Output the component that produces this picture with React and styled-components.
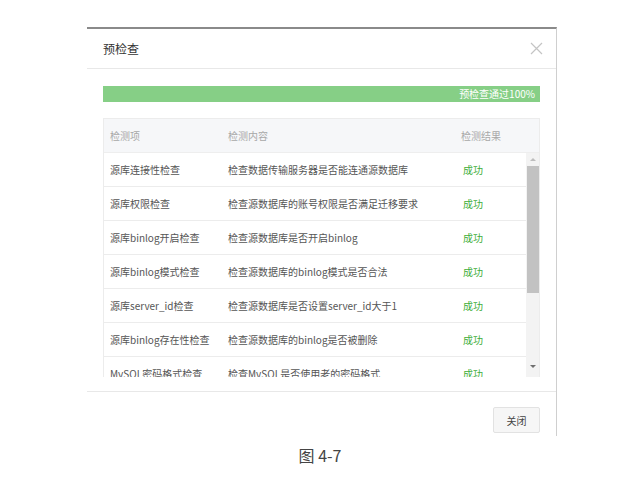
import React from 'react'
import styled, { createGlobalStyle } from 'styled-components'

const GlobalStyle = createGlobalStyle`
    html, body {
        margin: 0;
        padding: 0;
        background: #ffffff;
    }
    body {
        font-family: "Noto Sans CJK SC", "Noto Sans", sans-serif;
        color: #555;
    }
`

const rows = [
    ['源库连接性检查', '检查数据传输服务器是否能连通源数据库'],
    ['源库权限检查', '检查源数据库的账号权限是否满足迁移要求'],
    ['源库binlog开启检查', '检查源数据库是否开启binlog'],
    ['源库binlog模式检查', '检查源数据库的binlog模式是否合法'],
    ['源库server_id检查', '检查源数据库是否设置server_id大于1'],
    ['源库binlog存在性检查', '检查源数据库的binlog是否被删除'],
    ['MySQL密码格式检查', '检查MySQL是否使用老的密码格式'],
]

const CloseIcon = () => (
    <svg width="13" height="13" viewBox="0 0 13 13">
        <path d="M1 1 L12 12 M12 1 L1 12" stroke="#c4c4c4" strokeWidth="1.2" fill="none" />
    </svg>
)

const App = () => {
  return (
    <Page>
        <GlobalStyle />
        <Modal>
            <Header>
                <Title>预检查</Title>
                <CloseBtn><CloseIcon /></CloseBtn>
            </Header>
            <Body>
                <Progress>
                    <span>预检查通过100%</span>
                </Progress>
                <Table>
                    <HeadRow>
                        <span>检测项</span>
                        <span>检测内容</span>
                        <span>检测结果</span>
                    </HeadRow>
                    <TableBody>
                        <Rows>
                            {rows.map(([name, desc]) => (
                                <Row key={name}>
                                    <span>{name}</span>
                                    <span>{desc}</span>
                                    <Result>成功</Result>
                                </Row>
                            ))}
                        </Rows>
                        <Scrollbar>
                            <Arrow dir="up" />
                            <Thumb />
                            <Track />
                            <Arrow dir="down" />
                        </Scrollbar>
                    </TableBody>
                </Table>
            </Body>
            <Footer>
                <Button>关闭</Button>
            </Footer>
        </Modal>
        <Caption>图 4-7</Caption>
    </Page>
  )
}

const Page = styled.div`
    padding-top: 27px;
    padding-left: 87px;
    width: 470px;
`

const Modal = styled.div`
    width: 470px;
    box-sizing: border-box;
    background: #fff;
    border-top: 2px solid #8a8a8a;
    border-right: 1px solid #cfcfcf;
`

const Header = styled.div`
    height: 39px;
    display: flex;
    align-items: center;
    justify-content: space-between;
    padding: 0 13px 0 16px;
    border-bottom: 1px solid #e8e8e8;
`

const Title = styled.span`
    font-size: 12px;
    color: #333;
`

const CloseBtn = styled.span`
    display: flex;
    width: 13px;
    height: 13px;
`

const Body = styled.div`
    padding: 17px 16px 14px 16px;
    display: flex;
    flex-direction: column;
    gap: 16px;
`

const Progress = styled.div`
    height: 16px;
    background: #86cf86;
    display: flex;
    align-items: center;
    justify-content: flex-end;
    padding-right: 5px;
    span {
        font-size: 10px;
        color: #fff;
        line-height: 16px;
    }
`

const Table = styled.div`
    border: 1px solid #ececec;
    border-bottom: none;
    display: flex;
    flex-direction: column;
`

const HeadRow = styled.div`
    height: 33px;
    background: #f6f7f9;
    display: grid;
    grid-template-columns: 118px 233px 1fr;
    align-items: center;
    padding-left: 6px;
    font-size: 10px;
    color: #a8a8a8;
    border-bottom: 1px solid #eeeeee;
`

const TableBody = styled.div`
    height: 224px;
    display: flex;
    overflow: hidden;
`

const Rows = styled.div`
    flex: 1;
    display: flex;
    flex-direction: column;
`

const Row = styled.div`
    height: 34px;
    flex-shrink: 0;
    box-sizing: border-box;
    display: grid;
    grid-template-columns: 118px 235px 1fr;
    align-items: center;
    padding-left: 6px;
    font-size: 10px;
    color: #555;
    border-bottom: 1px solid #ececec;
`

const Result = styled.span`
    color: #3fae3a;
`

const Scrollbar = styled.div`
    width: 13px;
    background: #f3f3f3;
    display: flex;
    flex-direction: column;
    align-items: center;
    padding: 3px 0 7px;
    box-sizing: border-box;
`

const Arrow = styled.div`
    width: 0;
    height: 0;
    margin: 2px 0;
    border-left: 3px solid transparent;
    border-right: 3px solid transparent;
    ${p => p.dir === 'up'
        ? 'border-bottom: 3px solid #bdbdbd;'
        : 'border-top: 3px solid #6f6f6f;'}
`

const Thumb = styled.div`
    width: 12px;
    height: 127px;
    margin-top: 3px;
    background: #c2c2c2;
`

const Track = styled.div`
    flex: 1;
`

const Footer = styled.div`
    border-top: 1px solid #e8e8e8;
    display: flex;
    justify-content: flex-end;
    padding: 15px 16px 3px;
`

const Button = styled.button`
    width: 47px;
    height: 26px;
    padding: 0;
    background: #f6f6f6;
    border: 1px solid #e2e2e2;
    border-radius: 2px;
    font-family: "Noto Sans CJK SC", sans-serif;
    font-size: 10px;
    color: #444;
`

const Caption = styled.div`
    margin-top: 7px;
    text-align: center;
    width: 466px;
    font-size: 16px;
    color: #444;
    font-family: "Noto Sans CJK SC", "Noto Sans", sans-serif;
`

export default App
